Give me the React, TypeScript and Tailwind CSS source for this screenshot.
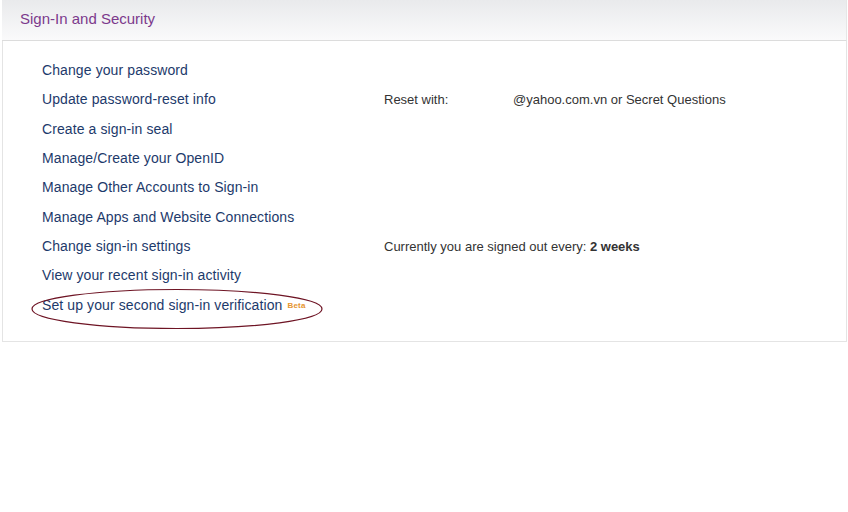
const links: { label: string; right?: React.ReactNode }[] = [
  { label: "Change your password" },
  {
    label: "Update password-reset info",
    right: (
      <div className="flex">
        <span className="w-[129px]">Reset with:</span>
        <span>@yahoo.com.vn or Secret Questions</span>
      </div>
    ),
  },
  { label: "Create a sign-in seal" },
  { label: "Manage/Create your OpenID" },
  { label: "Manage Other Accounts to Sign-in" },
  { label: "Manage Apps and Website Connections" },
  {
    label: "Change sign-in settings",
    right: (
      <span>
        Currently you are signed out every: <b className="font-bold">2 weeks</b>
      </span>
    ),
  },
  { label: "View your recent sign-in activity" },
];

export default function App() {
  return (
    <div className="w-[848px] h-[512px] bg-white font-['Liberation_Sans',Arial,sans-serif]">
      <div className="ml-[2px] w-[845px]">
        <div className="h-[41px] flex items-center pl-[18px] pb-[1px] bg-gradient-to-b from-[#e9eaec] to-[#fafafb] border-b border-[#dcdcdc] border-r border-r-[#e6e6e6]">
          <h1 className="text-[15px] text-[#7c3a8c]">Sign-In and Security</h1>
        </div>
        <div className="border-l border-r border-b border-[#e4e4e4] pt-[15px] pb-[21px] pl-[39px]">
          {links.map((l) => (
            <div key={l.label} className="h-[29.3px] flex items-center">
              <a className="w-[342px] text-[14px] tracking-[0.1px] text-[#1d3a6b] cursor-pointer">{l.label}</a>
              {l.right && <div className="text-[13px] text-[#333]">{l.right}</div>}
            </div>
          ))}
          <div className="h-[29.3px] flex items-center relative">
            <a className="text-[14px] tracking-[0.1px] text-[#1d3a6b] cursor-pointer">
              Set up your second sign-in verification
            </a>
            <span className="ml-[5px] mt-[2px] text-[8px] font-bold text-[#e59530] tracking-[0.2px]">Beta</span>
            <svg
              className="absolute left-[-13px] top-[-3px] pointer-events-none"
              width="296"
              height="44"
              viewBox="0 0 296 44"
            >
              <ellipse cx="148" cy="22" rx="145" ry="19.5" fill="none" stroke="#6e1424" strokeWidth="1.2" />
            </svg>
          </div>
        </div>
      </div>
    </div>
  );
}
